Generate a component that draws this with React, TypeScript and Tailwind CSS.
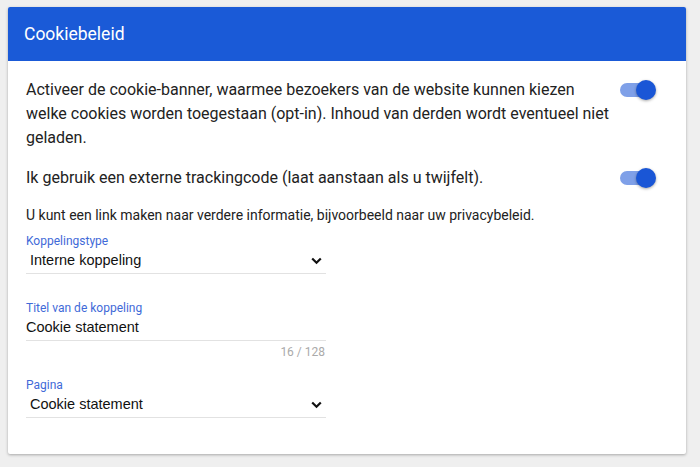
import React from "react";

function Toggle() {
  return (
    <div className="relative w-[36px] h-[20px] flex items-center shrink-0">
      <div className="w-[34px] h-[14px] rounded-full bg-[#7fa0e8]" />
      <div className="absolute right-0 top-0 w-[20px] h-[20px] rounded-full bg-[#1a56d6] shadow-[0_1px_3px_rgba(0,0,0,0.35)]" />
    </div>
  );
}

function Chevron() {
  return (
    <svg width="11" height="8" viewBox="0 0 11 8" className="shrink-0">
      <path d="M1.2 1.5 L5.5 5.8 L9.8 1.5" fill="none" stroke="#111" strokeWidth="2.2" />
    </svg>
  );
}

export default function App() {
  return (
    <div className="w-[700px] h-[467px] bg-[#efefef] pt-[7px] pl-[8px]" style={{ fontFamily: "Roboto, 'Liberation Sans', sans-serif" }}>
      <div className="w-[678px] h-[447px] bg-white shadow-[0_1px_3px_rgba(0,0,0,0.3)] rounded-[2px] overflow-hidden">
        <div className="h-[54px] bg-[#1a5ad7] flex items-center pl-[16px] text-white text-[17.5px]">
          Cookiebeleid
        </div>
        <div className="pl-[18px] pr-[30px] pt-[17px]">
          <div className="flex items-start justify-between">
            <p className="text-[16px] leading-[24px] text-[#222] w-[588px]">
              Activeer de cookie-banner, waarmee bezoekers van de website kunnen kiezen welke cookies worden toegestaan (opt-in). Inhoud van derden wordt eventueel niet geladen.
            </p>
            <div className="pt-[2px]"><Toggle /></div>
          </div>
          <div className="flex items-center justify-between mt-[16px]">
            <p className="text-[16px] leading-[24px] text-[#222]">
              Ik gebruik een externe trackingcode (laat aanstaan als u twijfelt).
            </p>
            <Toggle />
          </div>
          <p className="text-[14px] leading-[20px] text-[#222] mt-[15px]">
            U kunt een link maken naar verdere informatie, bijvoorbeeld naar uw privacybeleid.
          </p>
          <div className="w-[300px] mt-[8px]">
            <div className="text-[12px] leading-[16px] text-[#3f6ad8]">Koppelingstype</div>
            <div className="flex items-center justify-between h-[25px] pl-[4px] pr-[4px] border-b border-[#e2e2e2]" style={{ fontFamily: "'Liberation Sans', Arial, sans-serif" }}>
              <span className="text-[14.5px] text-[#111]">Interne koppeling</span>
              <Chevron />
            </div>
          </div>
          <div className="w-[300px] mt-[26px]">
            <div className="text-[12px] leading-[16px] text-[#3f6ad8]">Titel van de koppeling</div>
            <div className="flex items-center h-[25px] border-b border-[#e2e2e2]" style={{ fontFamily: "'Liberation Sans', Arial, sans-serif" }}>
              <span className="text-[14.5px] text-[#111]">Cookie statement</span>
            </div>
            <div className="text-right text-[12px] leading-[16px] text-[#aaa] mt-[3px] pr-[1px]">16 / 128</div>
          </div>
          <div className="w-[300px] mt-[17px]">
            <div className="text-[12px] leading-[16px] text-[#3f6ad8]">Pagina</div>
            <div className="flex items-center justify-between h-[25px] pl-[4px] pr-[4px] border-b border-[#e2e2e2]" style={{ fontFamily: "'Liberation Sans', Arial, sans-serif" }}>
              <span className="text-[14.5px] text-[#111]">Cookie statement</span>
              <Chevron />
            </div>
          </div>
        </div>
      </div>
    </div>
  );
}
